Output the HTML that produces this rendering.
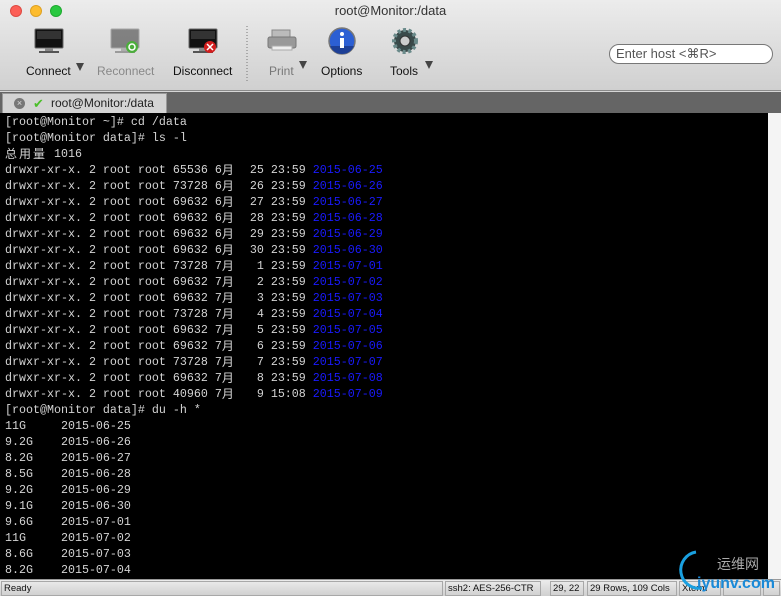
<!DOCTYPE html>
<html><head><meta charset="utf-8"><style>
*{margin:0;padding:0;box-sizing:border-box}
body{width:781px;height:596px;overflow:hidden;background:#d6d6d6;font-family:"Liberation Sans",sans-serif;position:relative}
.top{position:absolute;left:0;top:0;width:781px;height:91px;background:linear-gradient(#ececec,#d0d0d0);border-bottom:1px solid #8a8a8a}
.title{position:absolute;top:3px;left:0;width:781px;text-align:center;font-size:13px;color:#333}
.dot{position:absolute;top:5px;width:12px;height:12px;border-radius:50%}
.lbl{position:absolute;top:64px;font-size:12px;color:#111}
.arr{position:absolute;width:0;height:0;border-left:4px solid transparent;border-right:4px solid transparent;border-top:8px solid #444}
.host{position:absolute;left:609px;top:44px;width:164px;height:20px;border:1px solid #777;border-radius:10px;background:#fff;font-size:13px;color:#555;padding-left:6px;line-height:18px}
.tabbar{position:absolute;left:0;top:92px;width:781px;height:21px;background:#656565}
.tab{position:absolute;left:2px;top:1px;width:165px;height:20px;background:#d4d4d4;border:1px solid #999;border-bottom:none;font-size:12px;line-height:19px;color:#222}
.term{position:absolute;left:0;top:113px;width:768px;height:466px;background:#000;font-family:"Liberation Mono","Noto Sans CJK SC",monospace;font-size:11.67px;color:#d4d4d4;line-height:16px;padding:1px 0 0 5px;white-space:pre;overflow:hidden}
.term div{height:16px}
.c{display:inline-block;width:14px;height:16px;line-height:16px;vertical-align:top;font-family:"Noto Sans CJK SC",sans-serif;font-size:12px;overflow:hidden}
.b{color:#1a1aff}
.sb{position:absolute;left:768px;top:113px;width:13px;height:466px;background:#f4f4f4}
.status{position:absolute;left:0;top:579px;width:781px;height:17px;background:linear-gradient(#ececec,#cfcfcf);border-top:1px solid #999;font-size:9.5px;color:#111}
.cell{position:absolute;top:1px;height:15px;border:1px solid #a8a8a8;line-height:13px;padding-left:2px}
</style></head><body>
<div class="top">
<div class="dot" style="left:10px;background:#fc5f57;border:1px solid #de4a42"></div>
<div class="dot" style="left:30px;background:#fdbc2e;border:1px solid #dea123"></div>
<div class="dot" style="left:50px;background:#29c840;border:1px solid #1eaa2f"></div>
<div class="title">root@Monitor:/data</div>
<svg style="position:absolute;left:0;top:0" width="450" height="91">
<g><rect x="35" y="29" width="28" height="19" rx="1" fill="#111" stroke="#666"/><rect x="37" y="31" width="24" height="8" fill="#333"/><rect x="45" y="48" width="8" height="3" fill="#888"/><rect x="39" y="51" width="20" height="2" fill="#555"/></g>
<g opacity=".55" transform="translate(76,0)"><rect x="35" y="29" width="28" height="19" rx="1" fill="#333" stroke="#777"/><rect x="45" y="48" width="8" height="3" fill="#888"/><rect x="39" y="51" width="20" height="2" fill="#666"/></g>
<circle cx="132" cy="47" r="6" fill="#4cae3c"/><circle cx="132" cy="47" r="3" fill="none" stroke="#fff" stroke-width="1.5"/>
<g transform="translate(154,0)"><rect x="35" y="29" width="28" height="19" rx="1" fill="#111" stroke="#666"/><rect x="37" y="31" width="24" height="8" fill="#333"/><rect x="45" y="48" width="8" height="3" fill="#888"/><rect x="39" y="51" width="20" height="2" fill="#555"/></g>
<circle cx="210" cy="47" r="6" fill="#d21d1d"/><path d="M207 44l6 6M213 44l-6 6" stroke="#fff" stroke-width="1.5"/>
<line x1="247" y1="26" x2="247" y2="81" stroke="#777" stroke-dasharray="1 2"/>
<rect x="272" y="30" width="18" height="8" fill="#bbb" stroke="#888"/><rect x="268" y="37" width="28" height="11" rx="2" fill="#999" stroke="#777"/><rect x="272" y="46" width="20" height="4" fill="#eee" stroke="#aaa"/>
<circle cx="342" cy="41" r="13" fill="#2c5fd3" stroke="#777" stroke-width="1.5"/><path d="M330 46a13 13 0 0 0 24 0z" fill="#1d3f96"/><circle cx="342" cy="34" r="2" fill="#fff"/><rect x="340" y="38" width="4" height="10" fill="#fff"/>
<circle cx="405" cy="41" r="11" fill="#3a4a4a" stroke="#6a8a8a" stroke-width="4" stroke-dasharray="3 2.5"/><circle cx="405" cy="41" r="5" fill="#ccc" stroke="#333"/>
</svg>
<div class="lbl" style="left:26px">Connect</div><div class="arr" style="left:76px;top:63px"></div>
<div class="lbl" style="left:97px;color:#888">Reconnect</div>
<div class="lbl" style="left:173px">Disconnect</div>
<div class="lbl" style="left:269px;color:#777">Print</div><div class="arr" style="left:299px;top:61px"></div>
<div class="lbl" style="left:321px">Options</div>
<div class="lbl" style="left:390px">Tools</div><div class="arr" style="left:425px;top:61px"></div>
<div class="host">Enter host &lt;⌘R&gt;</div>
</div>
<div class="tabbar"><div class="tab"><span style="position:absolute;left:11px;top:4px;width:11px;height:11px;border-radius:50%;background:#777;color:#ddd;font-size:9px;line-height:11px;text-align:center">×</span><span style="position:absolute;left:30px;top:0;color:#4bbf2a;font-size:13px">✔</span><span style="position:absolute;left:48px">root@Monitor:/data</span></div></div>
<div class="term"><div>[root@Monitor ~]# cd /data</div><div>[root@Monitor data]# ls -l</div><div><span class="c">总</span><span class="c">用</span><span class="c">量</span> 1016</div><div>drwxr-xr-x. 2 root root 65536 6<span class="c">月</span>  25 23:59 <span class="b">2015-06-25</span></div><div>drwxr-xr-x. 2 root root 73728 6<span class="c">月</span>  26 23:59 <span class="b">2015-06-26</span></div><div>drwxr-xr-x. 2 root root 69632 6<span class="c">月</span>  27 23:59 <span class="b">2015-06-27</span></div><div>drwxr-xr-x. 2 root root 69632 6<span class="c">月</span>  28 23:59 <span class="b">2015-06-28</span></div><div>drwxr-xr-x. 2 root root 69632 6<span class="c">月</span>  29 23:59 <span class="b">2015-06-29</span></div><div>drwxr-xr-x. 2 root root 69632 6<span class="c">月</span>  30 23:59 <span class="b">2015-06-30</span></div><div>drwxr-xr-x. 2 root root 73728 7<span class="c">月</span>   1 23:59 <span class="b">2015-07-01</span></div><div>drwxr-xr-x. 2 root root 69632 7<span class="c">月</span>   2 23:59 <span class="b">2015-07-02</span></div><div>drwxr-xr-x. 2 root root 69632 7<span class="c">月</span>   3 23:59 <span class="b">2015-07-03</span></div><div>drwxr-xr-x. 2 root root 73728 7<span class="c">月</span>   4 23:59 <span class="b">2015-07-04</span></div><div>drwxr-xr-x. 2 root root 69632 7<span class="c">月</span>   5 23:59 <span class="b">2015-07-05</span></div><div>drwxr-xr-x. 2 root root 69632 7<span class="c">月</span>   6 23:59 <span class="b">2015-07-06</span></div><div>drwxr-xr-x. 2 root root 73728 7<span class="c">月</span>   7 23:59 <span class="b">2015-07-07</span></div><div>drwxr-xr-x. 2 root root 69632 7<span class="c">月</span>   8 23:59 <span class="b">2015-07-08</span></div><div>drwxr-xr-x. 2 root root 40960 7<span class="c">月</span>   9 15:08 <span class="b">2015-07-09</span></div><div>[root@Monitor data]# du -h *</div><div>11G     2015-06-25</div><div>9.2G    2015-06-26</div><div>8.2G    2015-06-27</div><div>8.5G    2015-06-28</div><div>9.2G    2015-06-29</div><div>9.1G    2015-06-30</div><div>9.6G    2015-07-01</div><div>11G     2015-07-02</div><div>8.6G    2015-07-03</div><div>8.2G    2015-07-04</div></div>
<div class="sb"></div>
<div class="status">
<div class="cell" style="left:1px;width:442px">Ready</div>
<div class="cell" style="left:445px;width:96px">ssh2: AES-256-CTR</div>
<div class="cell" style="left:550px;width:34px">29, 22</div>
<div class="cell" style="left:587px;width:90px">29 Rows, 109 Cols</div>
<div class="cell" style="left:679px;width:42px">Xterm</div>
<div class="cell" style="left:723px;width:38px"></div>
<div class="cell" style="left:763px;width:17px"></div>
</div>
<svg style="position:absolute;left:674px;top:548px" width="107" height="46"><path d="M22 4a18 18 0 1 0 6 36" fill="none" stroke="#1aa0e0" stroke-width="3"/><text x="43" y="21" font-size="14" fill="#aaa" font-family="Noto Sans CJK SC,sans-serif">运维网</text><text x="23" y="40" font-size="16" fill="#1a8ad8" font-family="Liberation Sans,sans-serif" font-weight="bold">iyunv.com</text></svg>
</body></html>
